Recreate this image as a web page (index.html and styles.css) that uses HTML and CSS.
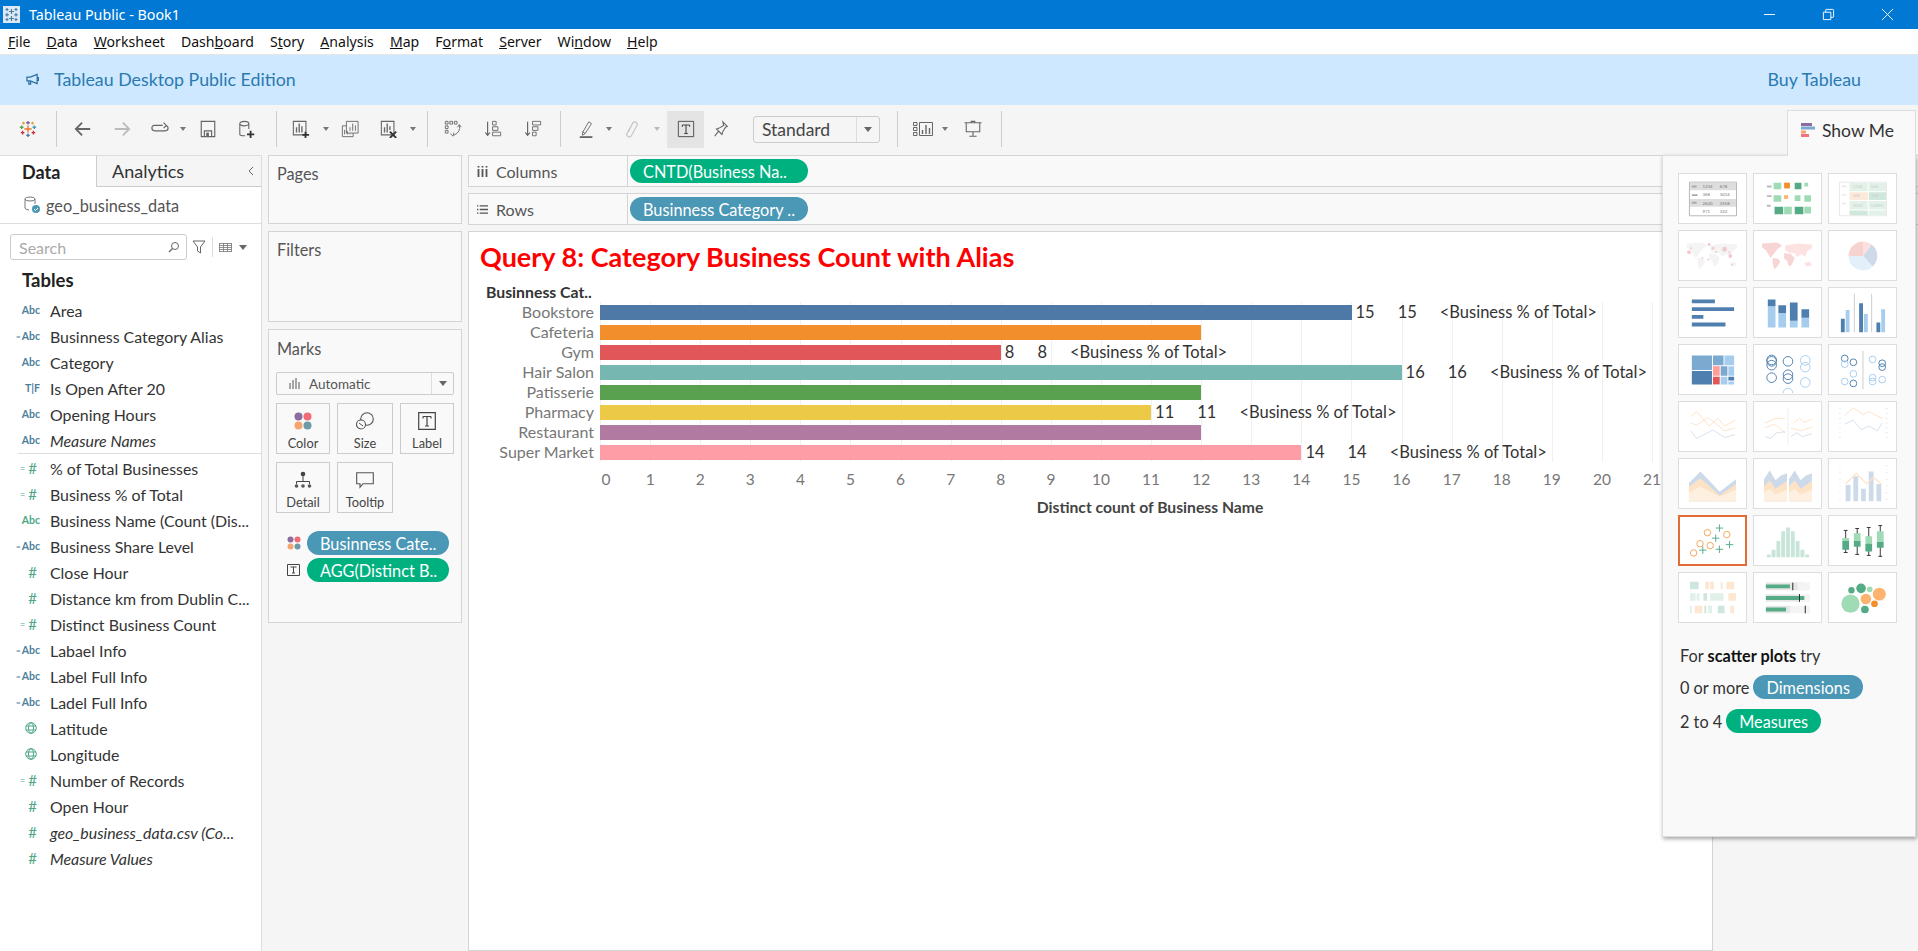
FILE: index.html
```html
<!DOCTYPE html>
<html lang="en">
<head>
<meta charset="utf-8">
<title>Tableau Public - Book1</title>
<link rel="stylesheet" href="styles.css">
</head>
<body>
<div class="app">
  <header class="titlebar">
    <div class="app-title">
      <svg class="app-icon" viewBox="0 0 17 17"><rect width="17" height="17" fill="#dce9f5"/><g stroke="#4a7fa8" stroke-width="1.2"><path d="M8.5 3v5M6 5.500h5M8.500 10v5M6 12.500h5M4 7v3.500M2.300 8.800h3.500M13 7v3.500M11.300 8.800h3.500M4 2v3M2.500 3.500h3M13 2v3M11.500 3.500h3M4 12v3M2.500 13.500h3M13 12v3M11.500 13.500h3"/></g></svg>
      <span>Tableau Public - Book1</span>
    </div>
    <div class="win-controls">
      <svg viewBox="0 0 14 14"><path d="M1 7h12" stroke="#fff" fill="none"/></svg>
      <svg viewBox="0 0 14 14"><path d="M1.500 4.500h8v8h-8zM4 4.500v-2.500q0-.5.5-.5h7q1 0 1 1v7q0 .5-.5.5h-2.500" stroke="#fff" fill="none"/></svg>
      <svg viewBox="0 0 14 14"><path d="M1 1l12 12M13 1L1 13" stroke="#fff" fill="none"/></svg>
    </div>
  </header>
  <nav class="menubar">
    <span><u>F</u>ile</span><span><u>D</u>ata</span><span><u>W</u>orksheet</span><span>Dash<u>b</u>oard</span><span>S<u>t</u>ory</span><span><u>A</u>nalysis</span><span><u>M</u>ap</span><span>F<u>o</u>rmat</span><span><u>S</u>erver</span><span>Wi<u>n</u>dow</span><span><u>H</u>elp</span>
  </nav>
  <div class="banner">
    <div class="banner-left">
      <svg class="megaphone" viewBox="0 0 14 14"><path d="M1 4.500h3.500L12 1.500v10L4.500 8.500H1zM3 8.500V12h2V9M12 5h1.500v3H12" fill="none" stroke="#2a6f9e" stroke-width="1.300"/></svg>
      <span>Tableau Desktop Public Edition</span>
    </div>
    <span class="buy">Buy Tableau</span>
  </div>
  <div class="toolbar">
    <span class="tb"><svg class="i20" viewBox="0 0 20 20"><g fill="none" stroke-width="1.500"><path d="M10 6v8M6 10h8" stroke="#e8762b"/><path d="M10 1v4M8 3h4" stroke="#7b5ea7"/><path d="M10 15v4M8 17h4" stroke="#4e79a7"/><path d="M3 6v4M1 8h4" stroke="#59a14f"/><path d="M17 6v4M15 8h4" stroke="#4a9fb5"/><path d="M4 12v4M2 14h4" stroke="#c8323a"/><path d="M16 12v4M14 14h4" stroke="#c8323a"/><path d="M5 2v3M3.500 3.500h3" stroke="#e8a02b"/><path d="M15 2v3M13.500 3.500h3" stroke="#e8a02b"/></g></svg></span>
    <span class="tb"><i class="sep"></i></span>
    <span class="tb"><svg class="i20" viewBox="0 0 20 20"><path d="M18 10H3M9 3l-7 7 7 7" fill="none" stroke="#666" stroke-width="2"/></svg></span>
    <span class="tb"><svg class="i20" viewBox="0 0 20 20"><path d="M2 10h15M11 3l7 7-7 7" fill="none" stroke="#bbb" stroke-width="2"/></svg></span>
    <span class="tb"><svg class="i20" viewBox="0 0 20 20"><path d="M13 6H4q-3 0-3 3v0q0 3 3 3h12q3 0 3-3 0-2-2-3M14 3l3 3-3 3" fill="none" stroke="#666" stroke-width="1.300"/></svg></span>
    <span class="tb"><i class="caret"></i></span>
    <span class="tb"><svg class="i20" viewBox="0 0 20 20"><path d="M2.500 1.500h15v17h-15zM6 18.500V12h8v6.500" fill="none" stroke="#666" stroke-width="1.300"/><rect x="8" y="14" width="3" height="4" fill="#666"/></svg></span>
    <span class="tb"><svg class="i20" viewBox="0 0 20 20"><path d="M2 4q0-2.500 5-2.500T12 4v6M2 4q0 2.500 5 2.500T12 4M2 4v12q0 1.500 6 1.500" fill="none" stroke="#666" stroke-width="1.200"/><path d="M14 12v8M10 16h8" stroke="#333" stroke-width="2"/></svg></span>
    <span class="tb"><i class="sep"></i></span>
    <span class="tb"><svg class="i20" viewBox="0 0 20 20"><path d="M1.500 1.500h14v15h-14z" fill="none" stroke="#666" stroke-width="1.200"/><path d="M5 8v6M8 4v10M11 7v7" stroke="#666" stroke-width="1.500"/><path d="M15 13v7M11.500 16.500h7.500" stroke="#333" stroke-width="2"/></svg></span>
    <span class="tb"><i class="caret"></i></span>
    <span class="tb"><svg class="i20" viewBox="0 0 20 20"><path d="M6 1.500h13v13H6z" fill="#f5f5f5" stroke="#666"/><path d="M10 8v4M13 4v8M16 6v6" stroke="#666"/><path d="M1.500 6.500H6M1.500 6.500v12h12v-4" fill="none" stroke="#666"/><path d="M4 11v5M7 12v4M10 15v1" stroke="#666"/></svg></span>
    <span class="tb"><svg class="i20" viewBox="0 0 20 20"><path d="M1.500 1.500h14v15h-14z" fill="none" stroke="#666" stroke-width="1.200"/><path d="M5 8v6M8 4v10M11 7v4" stroke="#666" stroke-width="1.500"/><path d="M11 13l7 7M18 13l-7 7" stroke="#333" stroke-width="2"/></svg></span>
    <span class="tb"><i class="caret"></i></span>
    <span class="tb"><i class="sep"></i></span>
    <span class="tb"><svg class="i20" viewBox="0 0 20 20"><g fill="none" stroke="#666"><path d="M1.500 1.500h3v3h-3zM6.500 1.500h3v3h-3zM11.500 1.500h3v3h-3zM1.500 6.500h3v3h-3zM1.500 11.500h3v3h-3z"/><path d="M17 6q2 7-6 11M7 15l3 3 1-4M15 8l2-3 2 3"/></g></svg></span>
    <span class="tb"><svg class="i20" viewBox="0 0 20 20"><g fill="none" stroke="#666"><path d="M4 2v15M1.500 14L4 17l2.500-3" stroke-width="1.300"/><path d="M9.500 1.500h4v4h-4zM9.500 7.500h6v4h-6zM9.500 13.500h9v4h-9z"/></g></svg></span>
    <span class="tb"><svg class="i20" viewBox="0 0 20 20"><g fill="none" stroke="#666"><path d="M4 2v15M1.500 14L4 17l2.500-3" stroke-width="1.300"/><path d="M9.500 1.500h9v4h-9zM9.500 7.500h6v4h-6zM9.500 13.500h4v4h-4z"/></g></svg></span>
    <span class="tb"><i class="sep"></i></span>
    <span class="tb"><svg class="i20" viewBox="0 0 20 20"><path d="M5 14L12 2l3 2-7 11-3 2zM8 15l-3-2" fill="none" stroke="#666"/><rect x="2" y="18" width="14" height="2" fill="#666"/></svg></span>
    <span class="tb"><i class="caret"></i></span>
    <span class="tb"><svg class="i20" viewBox="0 0 20 20"><path d="M6 13l5-10q2-2 4 0t0 4l-6 11q-2 2-4 0t0-4l5-9" fill="none" stroke="#c4c4c4" stroke-width="1.300"/></svg></span>
    <span class="tb"><i class="caret faded"></i></span>
    <span class="tb tb-end"><span class="tb-active"><svg class="i20" viewBox="0 0 20 20"><path d="M1.500 1.500h17v17h-17z" fill="none" stroke="#444"/><path d="M6 5.500h8M10 5.500V15M8 15h4M6 5.500v2M14 5.500v2" fill="none" stroke="#444" stroke-width="1.200"/></svg></span></span>
    <span class="tb"><svg class="i20" viewBox="0 0 20 20"><path d="M12 2l5 5-2 1-3 5-1 3-6-6 3-1 5-3zM7 13l-4 5" fill="none" stroke="#666" stroke-width="1.200"/></svg></span>
    <span class="combo-cell"><span class="combo"><span class="combo-text">Standard</span><span class="combo-arrow"><i class="caret dark"></i></span></span></span>
    <span class="tb"><i class="sep"></i></span>
    <span class="tb"><svg class="i20w" viewBox="0 0 20 14"><g fill="none" stroke="#666"><path d="M.5.500h3.500v3H.5zM.5 5.500h3.500v3H.5zM.5 10.500h3.500v3H.5zM6.500.500h13v13h-13z"/></g><path d="M9.500 8v4M13 3v9M16.500 6v6" stroke="#666" stroke-width="1.400"/></svg></span>
    <span class="tb"><i class="caret"></i></span>
    <span class="tb"><svg class="i20" viewBox="0 0 20 20"><path d="M.5 3h19M2.500 3v10h15V3M10 13v5M6 18h8M8 3V1.500h4V3" fill="none" stroke="#666" stroke-width="1.200"/></svg></span>
    <span class="tb"><i class="sep"></i></span>
  </div>
  <main class="workspace">
    <aside class="sidebar">
      <div class="tabs">
        <div class="tab tab-on">Data</div>
        <div class="tab tab-off">Analytics<svg class="collapse" viewBox="0 0 6 10"><path d="M5 1L1 5l4 4" fill="none" stroke="#666"/></svg></div>
      </div>
      <div class="source">
        <svg class="src-icon" viewBox="0 0 16 18"><path d="M1 3q0-2 5-2t5 2v5M1 3q0 2 5 2t5-2M1 3v9q0 1.500 4 2" fill="none" stroke="#777"/><circle cx="12" cy="13" r="4" fill="#4b97b6"/><path d="M10 13l1.500 1.500L14 12" stroke="#fff" fill="none"/></svg>
        <span>geo_business_data</span>
      </div>
      <div class="searchrow">
        <div class="search"><span>Search</span><svg class="mag" viewBox="0 0 12 12"><circle cx="7" cy="5" r="3.500" fill="none" stroke="#666"/><path d="M4.500 7.500L1 11" stroke="#666" stroke-width="1.300"/></svg></div>
        <svg class="filter" viewBox="0 0 14 14"><path d="M1 1h12L8.500 7v6l-3-2V7z" fill="none" stroke="#666"/></svg>
        <i class="vsep"></i>
        <svg class="gridi" viewBox="0 0 13 9"><path d="M0 .5h13M0 2.500h13M0 4.500h13M0 6.500h13M0 8.500h13M.5 0v9M4.500 0v9M8.500 0v9M12.500 0v9" stroke="#777" stroke-width=".8"/></svg>
        <i class="caret dark"></i>
      </div>
      <div class="tables">Tables</div>
      <ul class="fields">
        <li><b class="ty dim">Abc</b>Area</li>
        <li><b class="ty dim"><small>=</small>Abc</b>Businness Category Alias</li>
        <li><b class="ty dim">Abc</b>Category</li>
        <li><b class="ty dim">T|F</b>Is Open After 20</li>
        <li><b class="ty dim">Abc</b>Opening Hours</li>
        <li><b class="ty dim">Abc</b><em>Measure Names</em></li>
        <li class="divider"></li>
        <li><b class="ty meas hash"><small>=</small>#</b>% of Total Businesses</li>
        <li><b class="ty meas hash"><small>=</small>#</b>Business % of Total</li>
        <li><b class="ty meas">Abc</b>Business Name (Count (Dis...</li>
        <li><b class="ty dim"><small>=</small>Abc</b>Business Share Level</li>
        <li><b class="ty meas hash">#</b>Close Hour</li>
        <li><b class="ty meas hash">#</b>Distance km from Dublin C...</li>
        <li><b class="ty meas hash"><small>=</small>#</b>Distinct Business Count</li>
        <li><b class="ty dim"><small>=</small>Abc</b>Labael Info</li>
        <li><b class="ty dim"><small>=</small>Abc</b>Label Full Info</li>
        <li><b class="ty dim"><small>=</small>Abc</b>Ladel Full Info</li>
        <li><b class="ty"><svg class="globe" viewBox="0 0 12 12"><g fill="none" stroke="#4ea787"><circle cx="6" cy="6" r="5.300"/><ellipse cx="6" cy="6" rx="2.500" ry="5.300"/><path d="M1 4h10M1 8h10"/></g></svg></b>Latitude</li>
        <li><b class="ty"><svg class="globe" viewBox="0 0 12 12"><g fill="none" stroke="#4ea787"><circle cx="6" cy="6" r="5.300"/><ellipse cx="6" cy="6" rx="2.500" ry="5.300"/><path d="M1 4h10M1 8h10"/></g></svg></b>Longitude</li>
        <li><b class="ty meas hash"><small>=</small>#</b>Number of Records</li>
        <li><b class="ty meas hash">#</b>Open Hour</li>
        <li><b class="ty meas hash">#</b><em>geo_business_data.csv (Co...</em></li>
        <li><b class="ty meas hash">#</b><em>Measure Values</em></li>
      </ul>
    </aside>
    <section class="cards">
      <div class="card card-pages">Pages</div>
      <div class="card card-filters">Filters</div>
      <div class="card card-marks">
        <div class="marks-title">Marks</div>
        <div class="mark-type">
          <span class="mt-label"><svg class="mt-ico" viewBox="0 0 11 11"><path d="M1 5v6M4 2v9M7 0v11M10 4v7" stroke="#555"/></svg>Automatic</span>
          <span class="mt-arrow"><i class="caret dark"></i></span>
        </div>
        <div class="mark-grid">
          <div class="mbtn"><svg class="m-ico" viewBox="0 0 18 18"><circle cx="4.500" cy="4.500" r="4" fill="#8d6c9f"/><circle cx="13.500" cy="4.500" r="4" fill="#ef6b76"/><circle cx="4.500" cy="13.500" r="4" fill="#f5a66e"/><circle cx="13.500" cy="13.500" r="4" fill="#6d9aa8"/></svg>Color</div>
          <div class="mbtn"><svg class="m-ico" viewBox="0 0 18 18"><circle cx="11" cy="7" r="6.300" fill="none" stroke="#555" stroke-width="1.100"/><circle cx="5" cy="12.500" r="4.500" fill="#f9f9f9" stroke="#555" stroke-width="1.100"/><path d="M3 11l4 3" stroke="#555"/></svg>Size</div>
          <div class="mbtn"><svg class="m-ico" viewBox="0 0 18 18"><path d="M.7.700h16.600v16.600H.7z" fill="none" stroke="#444" stroke-width="1.200"/><path d="M5 4.500h8M9 4.500V14M7 14h4M5 4.500v2M13 4.500v2" fill="none" stroke="#444" stroke-width="1.200"/></svg>Label</div>
          <div class="mbtn"><svg class="m-ico" viewBox="0 0 18 18"><circle cx="9" cy="3" r="2.300" fill="#444"/><path d="M9 5v6M2.500 13v-2.500h13V13" fill="none" stroke="#444"/><circle cx="2.500" cy="15" r="1.800" fill="#555"/><circle cx="9" cy="15" r="1.800" fill="#555"/><circle cx="15.500" cy="15" r="1.800" fill="#555"/></svg>Detail</div>
          <div class="mbtn"><svg class="m-ico" viewBox="0 0 18 18"><path d="M.7 1.700h16.600v11H7l-3 3.500v-3.500H.7z" fill="none" stroke="#555" stroke-width="1.100"/></svg>Tooltip</div>
        </div>
        <div class="mark-pill">
          <svg class="mp-ico" viewBox="0 0 14 14"><circle cx="3.500" cy="3.500" r="3" fill="#8d6c9f"/><circle cx="10.500" cy="3.500" r="3" fill="#ef6b76"/><circle cx="3.500" cy="10.500" r="3" fill="#f5a66e"/><circle cx="10.500" cy="10.500" r="3" fill="#6d9aa8"/></svg>
          <span class="pill pill-blue pill-mark">Businness Cate..</span>
        </div>
        <div class="mark-pill">
          <svg class="mp-ico" viewBox="0 0 14 14"><path d="M.5 1.500h12v11H.5z" fill="none" stroke="#444"/><path d="M3.500 4h6M6.500 4v6M5 10h3" fill="none" stroke="#444"/></svg>
          <span class="pill pill-green pill-mark">AGG(Distinct B..</span>
        </div>
      </div>
    </section>
    <section class="stage">
      <div class="shelf">
        <div class="shelf-label"><svg class="shelf-ico" viewBox="0 0 11 11"><path d="M1.500 3v8M5.500 3v8M9.500 3v8M1.500 0v1.500M5.500 0v1.500M9.500 0v1.500" stroke="#555" stroke-width="1.800"/></svg>Columns</div>
        <span class="pill pill-green pill-shelf">CNTD(Business Na..</span>
      </div>
      <div class="shelf">
        <div class="shelf-label"><svg class="shelf-ico" viewBox="0 0 12 11"><path d="M3 1.500h9M3 5.500h9M3 9.500h9M0 1.500h1.500M0 5.500h1.500M0 9.500h1.500" stroke="#555" stroke-width="1.500"/></svg>Rows</div>
        <span class="pill pill-blue pill-shelf">Businness Category ..</span>
      </div>
      <div class="stage-bottom">
        <div class="view">
          <h1 class="chart-title">Query 8: Category Business Count with Alias</h1>
          <div class="row-head">Businness Cat..</div>
          <div class="row"><span class="row-name">Bookstore</span><div class="track"><span class="bar" style="width:751.500px;background:#4e79a7"></span><span class="vals"><span>15</span><span>15</span><span>&lt;Business % of Total&gt;</span></span></div></div>
          <div class="row"><span class="row-name">Cafeteria</span><div class="track"><span class="bar" style="width:601.200px;background:#f28e2b"></span></div></div>
          <div class="row"><span class="row-name">Gym</span><div class="track"><span class="bar" style="width:400.800px;background:#e15759"></span><span class="vals"><span>8</span><span>8</span><span>&lt;Business % of Total&gt;</span></span></div></div>
          <div class="row"><span class="row-name">Hair Salon</span><div class="track"><span class="bar" style="width:801.600px;background:#76b7b2"></span><span class="vals"><span>16</span><span>16</span><span>&lt;Business % of Total&gt;</span></span></div></div>
          <div class="row"><span class="row-name">Patisserie</span><div class="track"><span class="bar" style="width:601.200px;background:#59a14f"></span></div></div>
          <div class="row"><span class="row-name">Pharmacy</span><div class="track"><span class="bar" style="width:551.100px;background:#edc948"></span><span class="vals"><span>11</span><span>11</span><span>&lt;Business % of Total&gt;</span></span></div></div>
          <div class="row"><span class="row-name">Restaurant</span><div class="track"><span class="bar" style="width:601.200px;background:#b07aa1"></span></div></div>
          <div class="row"><span class="row-name">Super Market</span><div class="track"><span class="bar" style="width:701.400px;background:#ff9da7"></span><span class="vals"><span>14</span><span>14</span><span>&lt;Business % of Total&gt;</span></span></div></div>
          <div class="axis"><span class="tick tick-zero">0</span><span class="tick">1</span><span class="tick">2</span><span class="tick">3</span><span class="tick">4</span><span class="tick">5</span><span class="tick">6</span><span class="tick">7</span><span class="tick">8</span><span class="tick">9</span><span class="tick">10</span><span class="tick">11</span><span class="tick">12</span><span class="tick">13</span><span class="tick">14</span><span class="tick">15</span><span class="tick">16</span><span class="tick">17</span><span class="tick">18</span><span class="tick">19</span><span class="tick">20</span><span class="tick">21</span></div>
          <div class="axis-title">Distinct count of Business Name</div>
        </div>
      </div>
    </section>
  </main>
  <aside class="showme">
    <div class="sm-tab"><svg class="sm-ico" viewBox="0 0 14 14"><rect width="11" height="3" fill="#8d6c9f"/><rect y="3.500" width="14" height="3" fill="#7da7cf"/><rect y="7.500" width="5" height="3" fill="#f5a66e"/><rect y="11" width="8" height="3" fill="#f2737e"/></svg>Show Me</div>
    <div class="sm-body">
      <div class="thumbs">
        <svg class="thumb" viewBox="0 0 69 51"><path d="M10.500 8.500h49v35h-49z" fill="#fff" stroke="#b5b5b5"/><path d="M11 9h48v8H11zM11 26h48v8H11z" fill="#ddd"/><path d="M13 12h5v2h-5zM13 21h6v2h-6zM13 29h5v2h-5z" fill="#aaa"/><g class="tiny"><text x="24" y="15">1234</text><text x="42" y="15">678</text><text x="24" y="23">368</text><text x="42" y="23">3014</text><text x="24" y="32">2620</text><text x="42" y="32">2558</text><text x="24" y="41">971</text><text x="42" y="41">322</text></g></svg>
        <svg class="thumb" viewBox="0 0 69 51"><path d="M13 12h5v2h-5zM13 22h5v2h-5zM13 32h4v2h-4z" fill="#bbb"/><path d="M20 9h8v7h-8zM52 9h4v4h-4zM20 22h8v7h-8zM42 22h6v6h-6zM52 22h7v7h-7zM31 34h8v8h-8zM52 34h7v7h-7z" fill="#9fdcb6"/><path d="M42 9h7v7h-7zM21 34h9v8h-9zM42 34h9v8h-9z" fill="#55ab85"/><path d="M31 9h6v6h-6z" fill="#f28e2b"/><path d="M31 22h4v4h-4z" fill="#fbb36f"/></svg>
        <svg class="thumb" viewBox="0 0 69 51"><path d="M10.500 8.500h49v35h-49z" fill="#fff" stroke="#e8e8e8"/><path d="M21 9h19v9H21zM41 9h18v9H41zM21 28h19v9H21zM41 28h18v9H41zM41 38h18v5H41z" fill="#e3f2e9"/><path d="M41 19h18v8H41zM21 38h19v5H21z" fill="#d0e8dc"/><path d="M21 19h19v8H21z" fill="#fde9d8"/><path d="M13 12h5v1.500h-5zM13 21h5v1.500h-5zM13 30h4v1.500h-4z" fill="#e8e8e8"/><g class="tiny faint"><text x="24" y="15">1234</text><text x="43" y="15">546</text><text x="24" y="24">368</text><text x="43" y="24">348</text><text x="24" y="34">2620</text><text x="43" y="34">53890</text></g></svg>
        <svg class="thumb" viewBox="0 0 69 51"><path d="M8 13L24 12l5 3-5 4-4 5-3 4-2-3-3-5-4-3zM19 28l6 1 2 3-3 5-3 3-2-6zM32 15l13-2 15 1v4l-5 3-2 6-4-3-5 3-2-4h-5l-5-3zM31 23l7 1 4 4-3 7-3 2-2-6-3-2zM52 33l6-1 2 4-6 1z" fill="#f4f4f4"/><g fill="#f3c9cb"><circle cx="10" cy="22" r="2"/><circle cx="12" cy="18" r="1"/><circle cx="31" cy="14" r="1.500"/><circle cx="35" cy="18" r="1.500"/><circle cx="47" cy="19" r="2.500"/><circle cx="52" cy="22" r="1"/><circle cx="53" cy="26" r="2"/><circle cx="24" cy="28" r="1"/><circle cx="30" cy="30" r="1"/><circle cx="55" cy="35" r="1"/><circle cx="38" cy="22" r="1"/></g></svg>
        <svg class="thumb" viewBox="0 0 69 51"><path d="M8 13L24 12l5 3-5 4-4 5-3 4-2-3-3-5-4-3zM19 28l6 1 2 3-3 5-3 3-2-6zM31 23l7 1 4 4-3 7-3 2-2-6-3-2z" fill="#f8d5d5"/><path d="M32 15l13-2 15 1v4l-5 3-2 6-4-3-5 3-2-4h-5l-5-3zM52 33l6-1 2 4-6 1z" fill="#fde2e2"/></svg>
        <svg class="thumb" viewBox="0 0 69 51"><path d="M35 26V11a15 15 0 0 1 9 3z" fill="#fde0df"/><path d="M35 26L44 14a15 15 0 0 1 1 23z" fill="#cddbe8"/><path d="M35 26L45 37a15 15 0 0 1-25-11z" fill="#e3eff9"/><path d="M35 26H20a15 15 0 0 1 15-15z" fill="#f6d2d0"/></svg>

        <svg class="thumb" viewBox="0 0 69 51"><path d="M13 12h24v4H13zM13 20h44v4H13zM13 28h12v4H13zM13 36h35v4H13z" fill="#4e7fae"/></svg>
        <svg class="thumb" viewBox="0 0 69 51"><path d="M14 19h8v22h-8zM25 26h8v15h-8zM37 34h8v7h-8zM49 31h8v10h-8z" fill="#a6cdee"/><path d="M14 12h8v7h-8zM25 18h8v8h-8zM37 15h8v19h-8zM49 22h8v9h-8z" fill="#4e7fae"/></svg>
        <svg class="thumb" viewBox="0 0 69 51"><path d="M26 6v40M44 6v40" stroke="#ccc"/><path d="M12 32h4v14h-4zM31 16h4v30h-4zM49 36h4v10h-4z" fill="#4e7fae"/><path d="M17 23h4v23h-4zM36 27h4v19h-4zM54 22h4v24h-4z" fill="#a6cdee"/></svg>
        <svg class="thumb" viewBox="0 0 69 51"><path d="M13 11h21v15H13zM35 11h11v10H35zM43 22h7v10h-7z" fill="#7ba9cf"/><path d="M13 27h21v14H13zM51 33h6v4h-6z" fill="#4e7fae"/><path d="M47 11h10v10H47zM51 22h6v10h-6zM43 33h7v8h-7zM51 38h6v3h-6z" fill="#a6cdee"/><path d="M35 22h7v10h-7z" fill="#ff9d96"/><path d="M35 33h7v8h-7z" fill="#e15759"/></svg>
        <svg class="thumb" viewBox="0 0 69 51"><g fill="none" stroke="#4e7fae" stroke-width="1"><circle cx="18" cy="15.500" r="5"/><circle cx="18" cy="17" r="5"/><circle cx="18" cy="21" r="5"/><circle cx="35" cy="17" r="5"/><circle cx="35" cy="31" r="5"/><circle cx="35" cy="35" r="5"/><circle cx="18" cy="34" r="5"/></g><g fill="none" stroke="#a6cdee" stroke-width="1"><circle cx="53" cy="16" r="5"/><circle cx="53" cy="23" r="5"/><circle cx="53" cy="39" r="5"/><path d="M30 50a5 5 0 0 1 10 0"/></g></svg>
        <svg class="thumb" viewBox="0 0 69 51"><path d="M35 6v40" stroke="#ccc"/><g fill="none" stroke="#4e7fae"><circle cx="16" cy="14" r="3.500"/><circle cx="25" cy="18" r="3.500"/><circle cx="25" cy="40" r="3.500"/><circle cx="55" cy="19" r="3.500"/><circle cx="55" cy="23" r="3.500"/></g><g fill="none" stroke="#a6cdee"><circle cx="16" cy="20" r="3.500"/><circle cx="25" cy="30" r="3.500"/><circle cx="16" cy="38" r="3.500"/><circle cx="45" cy="15" r="3.500"/><circle cx="45" cy="34" r="3.500"/><circle cx="45" cy="38" r="3.500"/><circle cx="55" cy="36" r="3.500"/></g></svg>

        <svg class="thumb" viewBox="0 0 69 51"><g fill="none" stroke-width="1"><path d="M12 15l6-5 13 15 9-8 7 8 11-6M12 22l6 2 12-8 17 14 11-3" stroke="#fde3c8"/><path d="M12 30l6 8 17-9 12 8 11-3" stroke="#d4e1ee"/></g></svg>
        <svg class="thumb" viewBox="0 0 69 51"><path d="M35 6v39" stroke="#eee"/><g fill="none"><path d="M11 22l11-5h10M11 27l10-4 11 9M41 22l6-5 5 4 8-3M38 27l11 3 11-4" stroke="#fde3c8"/><path d="M11 36l6 2 6-6 9-1M38 36l6-4 6 4 10-3" stroke="#d4e1ee"/></g></svg>
        <svg class="thumb" viewBox="0 0 69 51"><path d="M10 7h2M10 12h2M10 17h2M10 22h2M10 27h2M10 32h2M10 37h2M58 7h3M58 12h3M58 17h3M58 22h3M58 27h3M58 32h3M58 37h3" stroke="#eee"/><g fill="none"><path d="M16 14l9-8 10 7 6-3 14 7" stroke="#fde3c8"/><path d="M16 23l9-4 8 10 8-4 9 5 5-8" stroke="#d4e1ee"/></g></svg>

        <svg class="thumb" viewBox="0 0 69 51"><path d="M10 25l12-12 20 21 17-13v23H10z" fill="#ccdaea"/><path d="M10 29l12-9 20 18 17-12v18H10z" fill="#fde2c6"/><path d="M10 35l12-6 20 10 17-7v12H10z" fill="#fef0e0"/></svg>
        <svg class="thumb" viewBox="0 0 69 51"><path d="M10 21l6-9 6 10 6-5 6-2v29H10zM36 21l6-9 6 10 6-5 6-2v29H36z" fill="#ccdaea"/><path d="M10 29l6-7 6 9 12-8v21H10zM36 29l6-7 6 9 12-8v21H36z" fill="#fde2c6"/><path d="M10 35l6-4 6 6 12-5v12H10zM36 35l6-4 6 6 12-5v12H36z" fill="#fef0e0"/></svg>
        <svg class="thumb" viewBox="0 0 69 51"><path d="M10 7h2M10 14h2M10 21h2M10 28h2M10 35h2M10 42h2M58 7h3M58 14h3M58 21h3M58 28h3M58 35h3M58 42h3" stroke="#eee"/><path d="M17 27h5v17h-5zM25 18h5v26h-5zM33 31h5v13h-5zM41 13h5v31h-5zM49 26h5v18h-5z" fill="#ccdaea"/><path d="M17 26l11-11 11 11 7-7 8 7" fill="none" stroke="#fde2c6" stroke-width="1.200"/></svg>

        <svg class="thumb thumb-sel" viewBox="0 0 69 51"><g fill="none" stroke="#f2a04b" stroke-width="1"><circle cx="29" cy="17" r="3.500"/><circle cx="50" cy="19" r="3.500"/><circle cx="21" cy="29" r="3.500"/><circle cx="32" cy="31" r="3.500"/><circle cx="14" cy="39" r="3.500"/></g><path d="M42 8v8M38 12h8M38 19v8M34 23h8M53 26v8M49 30h8M24 32v8M20 36h8M42 31v8M38 35h8" stroke="#4ea787" stroke-width="1"/></svg>
        <svg class="thumb" viewBox="0 0 69 51"><path d="M13 40h4v3h-4zM18 35h4v8h-4zM23 26h4v17h-4zM28 16h4v27h-4zM33 12h4v31h-4zM38 16h4v27h-4zM43 26h4v17h-4zM48 35h4v8h-4zM53 40h4v3h-4z" fill="#c7e5d8"/></svg>
        <svg class="thumb" viewBox="0 0 69 51"><path d="M17 15v23M15 15h4M15 38h4M29 13v27M27 13h4M27 40h4M41 12v29M39 12h4M39 41h4M53 10v32M51 10h4M51 42h4" stroke="#333" fill="none"/><path d="M13.500 23h7v3h-7zM25.500 18h7v8h-7zM37.500 21h7v8h-7zM49.500 16h7v11h-7z" fill="#9fdcb6"/><path d="M13.500 26h7v9h-7zM25.500 26h7v6h-7zM37.500 29h7v8h-7zM49.500 27h7v6h-7z" fill="#55ab85"/></svg>

        <svg class="thumb" viewBox="0 0 69 51"><path d="M11 9h9v8h-9zM25 21h4v8h-4zM26 34h2v8h-2zM40 34h7v8h-7z" fill="#cde7dc"/><path d="M11 21h6v8h-6zM18 21h3v8h-3zM32 21h14v8H32zM11 34h2v8h-2zM30 34h4v8h-4z" fill="#e1f1e9"/><path d="M27 9h4v8h-4zM32 9h4v8h-4zM43 9h2v8h-2zM49 9h8v8h-8zM51 21h8v8h-8zM16 34h8v8h-8zM53 34h4v8h-4z" fill="#fde7d2"/></svg>
        <svg class="thumb" viewBox="0 0 69 51"><path d="M12 10h40v8H12zM12 22h35v8H12zM12 34h25v8H12z" fill="#e6e6e6"/><path d="M45 10h13v8H45zM47 22h11v8H47zM37 34h21v8H37z" fill="#f4f4f4"/><path d="M12 12h25v4H12zM12 24h40v4H12zM12 36h21v4H12z" fill="#55ab85"/><path d="M40 10v8M47 22v8M53 34v8" stroke="#222"/></svg>
        <svg class="thumb" viewBox="0 0 69 51"><circle cx="22" cy="32" r="9.500" fill="#9fdcb6"/><circle cx="33" cy="16" r="5" fill="#55ab85"/><circle cx="23" cy="18" r="3.300" fill="#55ab85"/><circle cx="42" cy="17" r="3" fill="#9fdcb6"/><circle cx="52" cy="22" r="6.700" fill="#fbb36f"/><circle cx="38" cy="27" r="5.500" fill="#fbb36f"/><circle cx="47" cy="32" r="3.500" fill="#f28e2b"/><circle cx="37" cy="38" r="4" fill="#55ab85"/></svg>
      </div>
      <p class="sm-hint">For <strong>scatter plots</strong> try</p>
      <p class="sm-req">0 or more <span class="pill pill-blue pill-req">Dimensions</span></p>
      <p class="sm-req sm-req-2">2 to 4 <span class="pill pill-green pill-req">Measures</span></p>
    </div>
  </aside>
</div>
</body>
</html>
```

FILE: styles.css
```css
* { box-sizing: border-box; }
html, body { margin: 0; padding: 0; height: 100%; overflow: hidden; }
body { font-family: "Lato", "Noto Sans", sans-serif; color: #333; background: #f5f5f5; }
.app { position: relative; width: 1918px; height: 951px; display: flex; flex-direction: column; overflow: hidden; }

.titlebar { height: 29px; background: #0178d4; color: #fff; display: flex; justify-content: space-between; align-items: center; font-family: "Noto Sans", sans-serif; font-size: 14.300px; }
.app-title { display: flex; align-items: center; gap: 9px; padding-left: 3px; }
.app-icon { width: 17px; height: 17px; }
.win-controls { display: flex; gap: 46px; padding-right: 24px; }
.win-controls svg { width: 13px; height: 13px; display: block; }

.menubar { height: 26px; background: #fff; border-bottom: 1px solid #e6e6e6; display: flex; align-items: center; gap: 16px; padding-left: 8px; font-family: "Noto Sans", sans-serif; font-size: 14.100px; color: #111; }

.banner { height: 50px; padding-bottom: 2px; background: #cde8ff; display: flex; align-items: center; justify-content: space-between; padding-left: 26px; padding-right: 57px; color: #2a7ab0; font-size: 17.800px; }
.banner-left { display: flex; align-items: center; gap: 15px; }
.megaphone { width: 13px; height: 13px; }

.toolbar { height: 50px; padding-bottom: 2px; background: #f5f5f5; padding-left: 14px; display: grid; align-items: center; grid-template-columns: 28px 28px 26px 52px 24px 22px 28px 50px 8px 42px 7px 42px 36px 11px 18px 34px 46px 33px 22px 32px 11px 36px 14px 40px 34px 151px 16px 36px 8px 48px 8px; }
.tb { display: flex; align-items: center; justify-content: center; height: 38px; }
.tb-end { justify-content: flex-end; }
.tb-active { width: 37px; height: 37px; background: #e4e4e4; display: flex; align-items: center; justify-content: center; }
.i20 { width: 18px; height: 18px; display: block; }
.i20w { width: 20px; height: 14px; display: block; }
.sep { display: block; width: 1px; height: 36px; background: #ccc; }
.caret { display: block; width: 0; height: 0; border-left: 3.5px solid transparent; border-right: 3.5px solid transparent; border-top: 4px solid #777; }
.caret.faded { border-top-color: #bbb; }
.caret.dark { border-top-color: #666; border-left-width: 4.5px; border-right-width: 4.5px; border-top-width: 5px; }
.combo-cell { display: flex; align-items: center; padding-left: 15px; }
.combo { width: 127px; height: 27px; border: 1px solid #ccc; border-radius: 3px; display: flex; align-items: center; color: #444; font-size: 17.500px; }
.combo-text { flex: 1; padding-left: 8px; }
.combo-arrow { width: 23px; height: 25px; border-left: 1px solid #ddd; display: flex; align-items: center; justify-content: center; }

.workspace { flex: 1; display: flex; min-height: 0; background: #f5f5f5; }
.sidebar { width: 262px; background: #fff; border-right: 1px solid #ddd; display: flex; flex-direction: column; }
.tabs { display: flex; height: 32px; font-size: 18px; }
.tab { display: flex; align-items: center; }
.tab-on { width: 97px; padding-left: 22px; font-weight: 700; color: #222; border-right: 1px solid #ccc; border-top: 1px solid #ddd; }
.tab-off { flex: 1; padding-left: 15px; background: #f5f5f5; border-bottom: 1px solid #ccc; border-top: 1px solid #ddd; color: #333; position: relative; justify-content: space-between; padding-right: 7px; }
.collapse { width: 6px; height: 10px; }
.source { height: 37px; display: flex; align-items: center; gap: 6px; padding-left: 24px; border-bottom: 1px solid #ddd; font-size: 16.300px; color: #555; }
.src-icon { width: 16px; height: 18px; }
.searchrow { display: flex; align-items: center; margin-top: 10px; padding-left: 10px; height: 26px; }
.search { width: 177px; height: 26px; border: 1px solid #ccc; border-radius: 3px; display: flex; align-items: center; justify-content: space-between; padding: 0 6px 0 8px; color: #aaa; font-size: 16px; }
.mag { width: 12px; height: 12px; }
.filter { width: 14px; height: 14px; margin-left: 5px; }
.vsep { display: block; width: 1px; height: 20px; background: #ddd; margin: 0 6px; }
.gridi { width: 13px; height: 9px; margin-right: 7px; }
.tables { height: 37px; padding: 2px 0 0 22px; font-size: 18.500px; font-weight: 700; color: #222; display: flex; align-items: center; }
.fields { list-style: none; margin: 0; padding: 0; }
.fields li { height: 26px; display: flex; align-items: center; font-size: 15.900px; color: #333; white-space: nowrap; }
.fields li.divider { height: 1px; margin: 0 0 1px 18px; background: #ddd; }
.ty { width: 40px; margin-right: 10px; text-align: right; font-size: 10.500px; font-weight: 700; color: #4e7f9c; display: flex; justify-content: flex-end; align-items: center; }
.ty small { font-size: 8px; margin-right: 1px; }
.ty.meas { color: #4ea787; }
.ty.hash { font-size: 15px; font-weight: 400; padding-right: 3px; }
.ty.hash small { font-size: 9px; margin-right: 3px; }
.ty.dim { color: #4e7f9c; }
.globe { width: 12px; height: 12px; margin-right: 3px; }

.cards { width: 194px; margin-left: 6px; display: flex; flex-direction: column; gap: 7px; flex: none; }
.card { background: #f9f9f9; border: 1px solid #d4d4d4; padding: 8px 8px; font-size: 16.300px; color: #555; }
.card-pages { height: 69px; }
.card-filters { height: 91px; }
.card-marks { height: 294px; }
.marks-title { height: 20px; display: flex; align-items: center; margin-bottom: 14px; }
.mark-type { width: 178px; height: 23px; margin-left: -1px; border: 1px solid #ccc; border-radius: 2px; display: flex; align-items: center; justify-content: space-between; font-size: 13.500px; color: #555; }
.mt-label { display: flex; align-items: center; gap: 9px; padding-left: 12px; }
.mt-ico { width: 11px; height: 11px; }
.mt-arrow { width: 22px; height: 21px; border-left: 1px solid #ddd; display: flex; align-items: center; justify-content: center; }
.mark-grid { margin: 8px 0 18px -1px; display: grid; grid-template-columns: 54px 56px 54px; grid-auto-rows: 51px; column-gap: 7px; row-gap: 8px; }
.mbtn { border: 1px solid #ccc; display: flex; flex-direction: column; align-items: center; gap: 5px; padding-top: 8px; font-size: 12.800px; color: #444; }
.m-ico { width: 18px; height: 18px; }
.mark-pill { display: flex; align-items: center; height: 24px; margin-bottom: 3px; margin-left: 10px; gap: 6px; }
.mp-ico { width: 14px; height: 14px; flex: none; }

.pill { display: inline-flex; align-items: center; height: 24px; border-radius: 12px; color: #fff; font-size: 16.300px; white-space: nowrap; }
.pill-green { background: #00b180; }
.pill-blue { background: #4b97b6; }
.pill-mark { width: 142px; padding-left: 13px; }
.pill-shelf { width: 178px; padding-left: 13px; margin-left: 2px; }
.pill-req { padding: 0 13px; margin-left: 1px; }

.stage { flex: 1; margin-left: 6px; display: flex; flex-direction: column; min-width: 0; }
.shelf { height: 32px; margin-bottom: 6px; background: #f9f9f9; border-top: 1px solid #d4d4d4; border-bottom: 1px solid #d4d4d4; border-left: 1px solid #d4d4d4; display: flex; align-items: center; }
.shelf-label { width: 159px; height: 100%; border-right: 1px solid #d4d4d4; display: flex; align-items: center; gap: 8px; padding-left: 8px; font-size: 16px; color: #555; }
.shelf-ico { width: 11px; height: 11px; }
.stage-bottom { flex: 1; display: flex; min-height: 0; }
.view { width: 1245px; background: #fff; border: 1px solid #d4d4d4; padding: 11px 0 0 11px; }
.chart-title { margin: 0 0 10px; height: 28px; line-height: 28px; font-size: 27px; font-weight: 700; color: #f00; white-space: nowrap; }
.row-head { height: 21px; margin-left: 6px; line-height: 21px; font-size: 15.800px; font-weight: 700; color: #333; }
.row { display: flex; height: 20px; }
.row-name { width: 114px; margin-right: 6px; text-align: right; font-size: 16px; color: #777; line-height: 20px; white-space: nowrap; }
.track { width: 1053px; height: 20px; padding-top: 3px; display: flex; background: repeating-linear-gradient(90deg, #f0f0f0 0 1px, transparent 1px 50.100px); }
.bar { display: block; height: 15px; flex: none; }
.vals { display: flex; gap: 23px; padding-left: 4px; font-size: 16.500px; line-height: 15px; color: #333; white-space: nowrap; }
.axis { display: flex; margin-left: 95px; padding-top: 7px; border-top: 0; height: 34px; font-size: 15.500px; color: #777; }
.tick { width: 50.100px; flex: none; text-align: center; line-height: 20px; }
.tick-zero { padding-left: 12px; }
.axis-title { width: 1340px; text-align: center; margin-top: 2px; font-size: 15.700px; font-weight: 700; color: #444; }

.showme { position: absolute; left: 1662px; top: 110px; width: 254px; height: 727px; display: flex; flex-direction: column; }
.sm-tab { align-self: flex-end; width: 129px; height: 46px; margin-bottom: -1px; padding-bottom: 7px; background: #f9f9f9; border: 1px solid #ddd; border-bottom: 0; display: flex; align-items: center; gap: 7px; padding-left: 13px; font-size: 17.500px; color: #333; position: relative; z-index: 1; }
.sm-ico { width: 14px; height: 16px; }
.sm-body { flex: 1; background: #f9f9f9; border: 1px solid #ddd; box-shadow: 1px 2px 4px rgba(0, 0, 0, .35); padding: 17px 0 0 15px; }
.thumbs { display: grid; grid-template-columns: repeat(3, 69px); grid-auto-rows: 51px; gap: 6px; }
.thumb { width: 69px; height: 51px; background: #fff; border: 1px solid #ddd; display: block; }
.thumb-sel { border: 2px solid #e26b36; }
.tiny { font-size: 4.500px; fill: #777; font-family: "Lato", sans-serif; }
.faint { fill: #ccc; }
.sm-hint { margin: 23px 0 0 2px; font-size: 16.300px; color: #333; }
.sm-hint strong { font-weight: 700; color: #111; }
.sm-req { margin: 10px 0 0 2px; display: flex; align-items: center; gap: 3px; font-size: 16.300px; color: #333; }
.sm-req-2 { margin-top: 10px; }
```
